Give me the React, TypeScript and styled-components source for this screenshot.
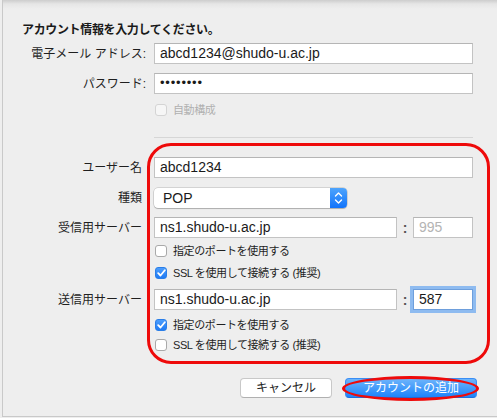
import React from 'react';
import styled, { createGlobalStyle } from 'styled-components';

const GlobalStyle = createGlobalStyle`
  html, body {
    margin: 0;
    padding: 0;
    background: #eeeeee;
  }
  body {
    font-family: "Liberation Sans", "Noto Sans CJK JP", sans-serif;
    color: #222;
  }
`;

const Sheet = styled.div`
  position: relative;
  box-sizing: border-box;
  width: 495px;
  height: 417px;
  margin-left: 2px;
  padding: 22px 24px 0 19px;
  border-left: 1px solid #c9c9c9;
  border-bottom: 1px solid #c9c9c9;
  background: linear-gradient(to bottom, #cdcdcd 0, #e6e6e6 4px, #eeeeee 9px);
`;

const Heading = styled.div`
  font-size: 12px;
  font-weight: 700;
  line-height: 16px;
  height: 16px;
  color: #1a1a1a;
  letter-spacing: -0.35px;
`;

const Row = styled.div<{ $top: number }>`
  display: grid;
  grid-template-columns: 124px 1fr;
  column-gap: 8px;
  align-items: center;
  margin-top: ${p => p.$top}px;
`;

const Label = styled.label<{ $inset?: boolean }>`
  text-align: right;
  padding-right: ${p => (p.$inset ? 4 : 0)}px;
  font-size: 12px;
  line-height: 16px;
  color: #1f1f1f;
  white-space: nowrap;
`;

const TextBox = styled.div<{ $muted?: boolean; $focused?: boolean }>`
  box-sizing: border-box;
  height: 21px;
  padding: 0 5px;
  background: #fff;
  border: 1px solid ${p => (p.$focused ? '#6e9fdc' : '#c3c3c3')};
  border-top-color: ${p => (p.$focused ? '#6e9fdc' : '#b5b5b5')};
  box-shadow: ${p => (p.$focused ? '0 0 0 3px rgba(110, 170, 240, 0.75)' : 'none')};
  font-size: 14px;
  line-height: 19px;
  color: ${p => (p.$muted ? '#b4b4b4' : '#1a1a1a')};
  white-space: nowrap;
  overflow: hidden;
`;

const Dots = styled.span`
  font-size: 13px;
  letter-spacing: 0.8px;
  position: relative;
  top: -1px;
`;

const Separator = styled.div`
  height: 1px;
  margin: 20px 0 0 132px;
  background: #d6d6d6;
`;

const Section = styled.div`
  position: relative;
`;

const RedBox = styled.div`
  position: absolute;
  left: 125px;
  right: -17px;
  top: -14px;
  bottom: -12px;
  border: 3px solid #ee0a0a;
  border-radius: 24px;
  pointer-events: none;
`;

const Select = styled.div`
  position: relative;
  box-sizing: border-box;
  width: 193px;
  height: 20px;
  padding-left: 9px;
  background: #fff;
  border-radius: 4px;
  box-shadow: 0 0 0 0.5px rgba(0, 0, 0, 0.22), 0 1px 1px rgba(0, 0, 0, 0.18);
  font-size: 14px;
  line-height: 20px;
  color: #1a1a1a;
`;

const SelectArrow = styled.div`
  position: absolute;
  top: 0;
  right: 0;
  bottom: 0;
  width: 17px;
  border-radius: 0 4px 4px 0;
  background: linear-gradient(to bottom, #4ea4fc, #1173fb);
  display: flex;
  align-items: center;
  justify-content: center;
`;

const ServerField = styled.div`
  display: flex;
  align-items: center;
`;

const Colon = styled.span`
  width: 16px;
  text-align: center;
  font-size: 14px;
  font-weight: 700;
  color: #555;
`;

const Grow = styled.div`
  flex: 1;
`;

const PortBox = styled.div`
  width: 60px;
`;

const CheckRow = styled.div<{ $disabled?: boolean }>`
  display: flex;
  align-items: center;
  gap: 6px;
  height: 14px;
  font-size: 11px;
  line-height: 14px;
  letter-spacing: -0.4px;
  color: ${p => (p.$disabled ? '#b0b0b0' : '#1f1f1f')};
  padding-left: 1px;
`;

const Box = styled.span<{ $checked?: boolean; $disabled?: boolean }>`
  box-sizing: border-box;
  width: 12px;
  height: 12px;
  border-radius: 3px;
  display: inline-flex;
  align-items: center;
  justify-content: center;
  flex-shrink: 0;
  background: ${p =>
    p.$checked ? 'linear-gradient(to bottom, #4c9dfc, #1f7bf5)' : p.$disabled ? '#f6f6f6' : '#fff'};
  border: 1px solid ${p => (p.$checked ? '#2a7ee8' : p.$disabled ? '#d4d4d4' : '#a9a9a9')};
`;

const Footer = styled.div`
  display: flex;
  justify-content: flex-end;
  gap: 13px;
  margin: 26px -4px 0 0;
`;

const Button = styled.button<{ $primary?: boolean }>`
  position: relative;
  box-sizing: border-box;
  height: 20px;
  width: ${p => (p.$primary ? 132 : 92)}px;
  padding: 0;
  border-radius: 4px;
  font-family: inherit;
  font-size: 12px;
  line-height: 18px;
  color: ${p => (p.$primary ? '#fff' : '#222')};
  background: ${p => (p.$primary ? 'linear-gradient(to bottom, #6db4fb, #1d84fb)' : '#fff')};
  border: ${p => (p.$primary ? '1px solid #3a8ef5' : '1px solid #c8c8c8')};
  border-bottom-color: ${p => (p.$primary ? '#1b6fe0' : '#b0b0b0')};
`;

const RedEllipse = styled.span`
  position: absolute;
  left: -4px;
  right: -3px;
  top: -3px;
  bottom: -4px;
  border: 3px solid #ee0a0a;
  border-radius: 50%;
  pointer-events: none;
`;

const Check = () => (
  <svg width="9" height="8" viewBox="0 0 9 8">
    <path d="M1.2 4.2 L3.5 6.5 L7.8 1.3" fill="none" stroke="#fff" strokeWidth="1.8" strokeLinecap="round" strokeLinejoin="round" />
  </svg>
);

const Chevrons = () => (
  <svg width="9" height="14" viewBox="0 0 9 14">
    <path d="M1.5 5 L4.5 2 L7.5 5 M1.5 9 L4.5 12 L7.5 9" fill="none" stroke="#fff" strokeWidth="1.4" strokeLinecap="round" strokeLinejoin="round" />
  </svg>
);

const Checkbox: React.FC<{ label: string; checked?: boolean; disabled?: boolean }> = ({ label, checked, disabled }) => (
  <CheckRow $disabled={disabled}>
    <Box $checked={checked} $disabled={disabled}>{checked && <Check />}</Box>
    {label}
  </CheckRow>
);

export default function App() {
  return (
    <>
      <GlobalStyle />
      <Sheet>
        <Heading>アカウント情報を入力してください。</Heading>

        <Row $top={5}>
          <Label>電子メール アドレス:</Label>
          <TextBox>abcd1234@shudo-u.ac.jp</TextBox>
        </Row>
        <Row $top={9}>
          <Label>パスワード:</Label>
          <TextBox><Dots>••••••••</Dots></TextBox>
        </Row>
        <Row $top={9}>
          <span />
          <Checkbox label="自動構成" disabled />
        </Row>

        <Separator />

        <Section>
          <RedBox />
          <Row $top={19}>
            <Label $inset>ユーザー名</Label>
            <TextBox>abcd1234</TextBox>
          </Row>
          <Row $top={10}>
            <Label $inset>種類</Label>
            <Select>
              POP
              <SelectArrow><Chevrons /></SelectArrow>
            </Select>
          </Row>
          <Row $top={9}>
            <Label $inset>受信用サーバー</Label>
            <ServerField>
              <Grow><TextBox>ns1.shudo-u.ac.jp</TextBox></Grow>
              <Colon>:</Colon>
              <PortBox><TextBox $muted>995</TextBox></PortBox>
            </ServerField>
          </Row>
          <Row $top={6}>
            <span />
            <Checkbox label="指定のポートを使用する" />
          </Row>
          <Row $top={8}>
            <span />
            <Checkbox label="SSL を使用して接続する (推奨)" checked />
          </Row>
          <Row $top={9}>
            <Label $inset>送信用サーバー</Label>
            <ServerField>
              <Grow><TextBox>ns1.shudo-u.ac.jp</TextBox></Grow>
              <Colon>:</Colon>
              <PortBox><TextBox $focused>587</TextBox></PortBox>
            </ServerField>
          </Row>
          <Row $top={8}>
            <span />
            <Checkbox label="指定のポートを使用する" checked />
          </Row>
          <Row $top={6}>
            <span />
            <Checkbox label="SSL を使用して接続する (推奨)" />
          </Row>
        </Section>

        <Footer>
          <Button>キャンセル</Button>
          <Button $primary>
            アカウントの追加
            <RedEllipse />
          </Button>
        </Footer>
      </Sheet>
    </>
  );
}
